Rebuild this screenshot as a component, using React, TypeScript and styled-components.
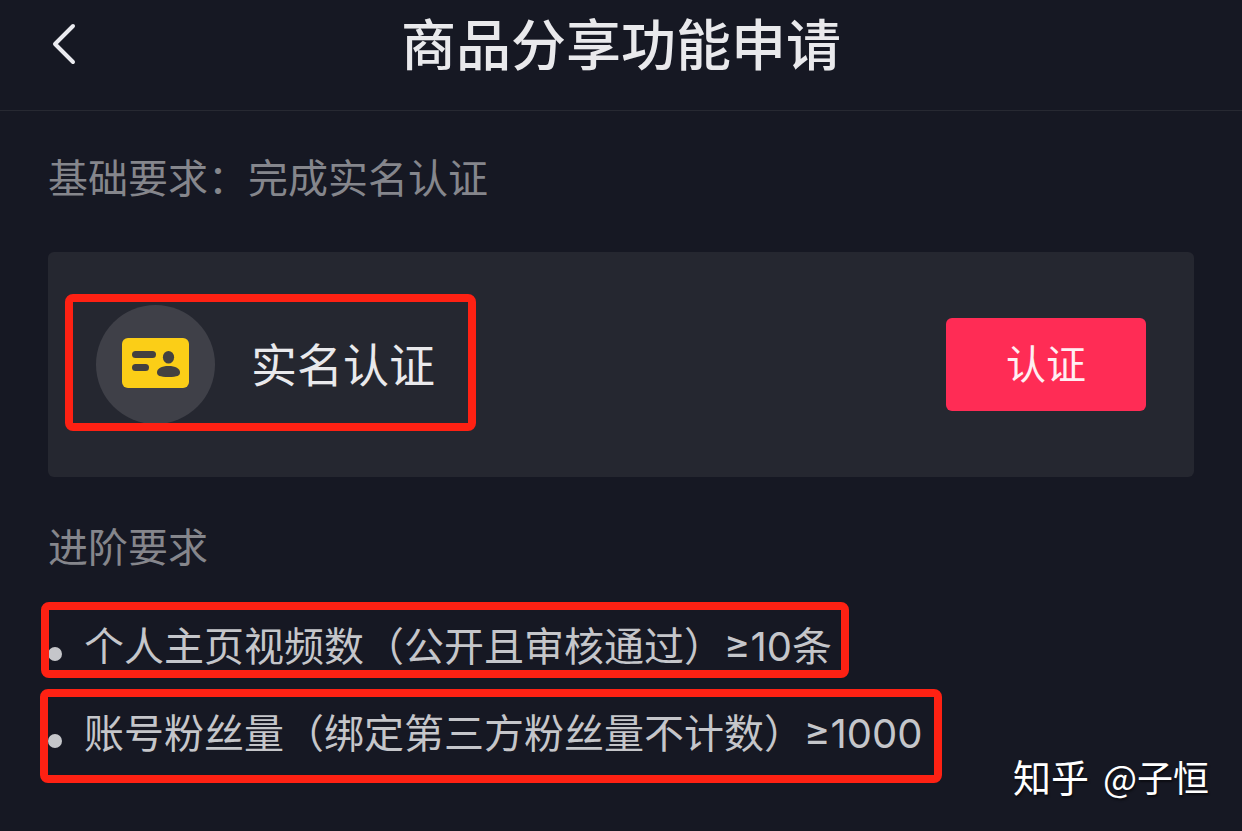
import styled, { createGlobalStyle, css } from "styled-components";

const GlobalStyle = createGlobalStyle`
  *, *::before, *::after { box-sizing: border-box; }
  body {
    margin: 0;
    background: #161823;
    font-family: Inter, "Noto Sans CJK SC", sans-serif;
  }
`;

const Page = styled.div`
  position: relative;
  min-height: 100vh;
  background: #161823;
  color: #e9e9ec;
`;

const Header = styled.header`
  display: grid;
  grid-template-columns: 80px 1fr 80px;
  align-items: center;
  padding: 5px 24px 25px;
  border-bottom: 1px solid #272932;
`;

const BackButton = styled.button`
  display: flex;
  align-items: center;
  justify-content: center;
  width: 80px;
  height: 80px;
  padding: 0;
  border: 0;
  background: none;
  color: #ebebf0;
  cursor: pointer;
`;

const Title = styled.h1`
  margin: 0;
  font-size: 55px;
  line-height: 80px;
  font-weight: 500;
  text-align: center;
`;

const Content = styled.main`
  display: flex;
  flex-direction: column;
  padding: 40px 48px 48px;
`;

const SectionLabel = styled.h2`
  margin: 0;
  font-size: 40px;
  line-height: 56px;
  font-weight: 400;
  color: #85868c;
`;

const Card = styled.section`
  display: flex;
  align-items: center;
  justify-content: space-between;
  margin: 45px 0 43px;
  padding: 53px 48px;
  border-radius: 6px;
  background: #252730;
`;

const marked = css<{ $inset: string }>`
  position: relative;

  &::after {
    content: "";
    position: absolute;
    inset: ${(p) => p.$inset};
    border: 8px solid #fe2113;
    border-radius: 8px;
    pointer-events: none;
  }
`;

const Identity = styled.div<{ $inset: string }>`
  display: flex;
  align-items: center;
  gap: 36px;
  ${marked}
`;

const IconCircle = styled.span`
  display: flex;
  align-items: center;
  justify-content: center;
  width: 119px;
  height: 119px;
  padding-bottom: 3px;
  border-radius: 50%;
  background: #3f4048;
`;

const IdentityName = styled.span`
  font-size: 46px;
  line-height: 64px;
`;

const VerifyButton = styled.button`
  padding: 18px 60px;
  border: 0;
  border-radius: 6px;
  background: #ff2c55;
  color: #ffeef2;
  font-family: inherit;
  font-size: 40px;
  line-height: 57px;
  cursor: pointer;
`;

const RequirementList = styled.ul`
  display: flex;
  flex-direction: column;
  align-items: flex-start;
  gap: 31px;
  margin: 43px 0 0;
  padding: 0;
  list-style: none;
`;

const Requirement = styled.li<{ $inset: string }>`
  display: flex;
  align-items: center;
  gap: 22px;
  font-size: 40px;
  line-height: 56px;
  color: #c5c6ca;
  ${marked}

  &::before {
    content: "";
    width: 14px;
    height: 14px;
    margin-top: 14px;
    border-radius: 50%;
    background: currentColor;
  }
`;

const Watermark = styled.footer`
  position: absolute;
  right: 33px;
  bottom: 29px;
  display: flex;
  gap: 14px;
  font-family: "Noto Sans CJK SC", sans-serif;
  font-size: 36px;
  line-height: 52px;
  color: #fff;
  text-shadow: 1px 2px 2px rgba(0, 0, 0, 0.5);
`;

const Brand = styled.span`
  font-size: 38px;
`;

function BackIcon() {
  return (
    <svg width="28" height="44" viewBox="0 0 28 44" fill="none" aria-hidden="true">
      <path d="M23 3 5 21l18 18" stroke="currentColor" strokeWidth="4" strokeLinecap="round" strokeLinejoin="round" />
    </svg>
  );
}

function IdCardIcon() {
  return (
    <svg width="67" height="50" viewBox="0 0 67 50" aria-hidden="true">
      <rect width="67" height="50" rx="6" fill="#fbce17" />
      <g fill="#434140">
        <rect x="10" y="13" width="24" height="7" rx="3.5" />
        <rect x="10" y="26" width="17" height="7" rx="3.5" />
        <ellipse cx="46.5" cy="19.2" rx="5.6" ry="6.3" />
        <path d="M46.5 28c7 0 11.500 2.500 11.500 6.500 0 3-2.500 4.500-11.500 4.500S35 37.500 35 34.500C35 30.500 39.500 28 46.500 28Z" />
      </g>
    </svg>
  );
}

const requirements = [
  { text: "个人主页视频数（公开且审核通过）≥10条", inset: "-17px -17px -3px -7px" },
  { text: "账号粉丝量（绑定第三方粉丝量不计数）≥1000", inset: "-17px -20px -21px -8px" },
];

export default function App() {
  return (
    <Page>
      <GlobalStyle />
      <Header>
        <BackButton type="button" aria-label="返回">
          <BackIcon />
        </BackButton>
        <Title>商品分享功能申请</Title>
      </Header>
      <Content>
        <SectionLabel>基础要求：完成实名认证</SectionLabel>
        <Card>
          <Identity $inset="-11px -41px -7px -31px">
            <IconCircle>
              <IdCardIcon />
            </IconCircle>
            <IdentityName>实名认证</IdentityName>
          </Identity>
          <VerifyButton type="button">认证</VerifyButton>
        </Card>
        <SectionLabel>进阶要求</SectionLabel>
        <RequirementList>
          {requirements.map((item) => (
            <Requirement key={item.text} $inset={item.inset}>
              {item.text}
            </Requirement>
          ))}
        </RequirementList>
      </Content>
      <Watermark>
        <Brand>知乎</Brand>
        <span>@子恒</span>
      </Watermark>
    </Page>
  );
}
